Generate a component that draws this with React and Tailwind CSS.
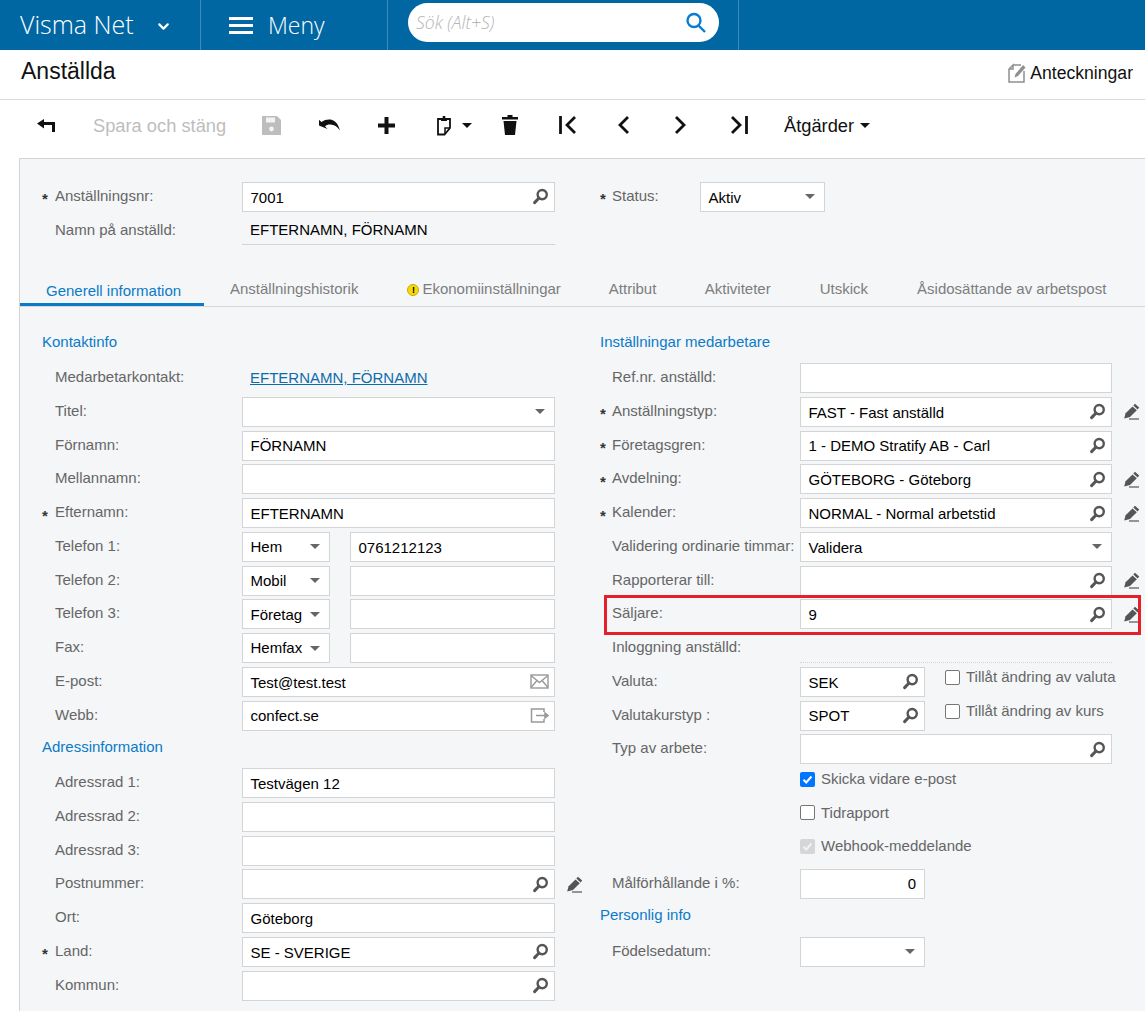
import { FiChevronDown } from "react-icons/fi";

function Lens() {
  return (
    <svg width="17" height="17" viewBox="0 0 17 17" fill="none" className="text-[#555]">
      <circle cx="10.2" cy="6.6" r="4.6" stroke="currentColor" strokeWidth="2.4" />
      <path d="M6.8 10.2 2.6 14.6" stroke="currentColor" strokeWidth="3" strokeLinecap="round" />
    </svg>
  );
}

function Pencil() {
  return (
    <svg width="17" height="17" viewBox="0 0 17 17" className="text-[#555]" fill="currentColor">
      <path d="M12 .8 16.2 4.6 14.6 6.4 10.3 2.6Z" />
      <path d="M9.5 3.4 13.8 7.2 7 14 1.2 15.4 2.6 10.2Z" />
      <path d="M6 15.4h10v1.2H6z" />
    </svg>
  );
}

function Caret({ color = "border-t-[#666]" }) {
  return <span className={`h-0 w-0 border-x-[5px] border-t-[5px] border-x-transparent ${color}`} />;
}

function Field({ w = "w-[313px]", value, icon }) {
  return (
    <div className={`${w} h-[30px] shrink-0 flex items-center justify-between pl-[7.5px] pr-[5px] bg-white border border-[#d2d4d6] text-[15px] text-black`}>
      <span className="whitespace-nowrap pt-[2px]">{value}</span>
      {icon === "search" && <Lens />}
      {icon === "select" && <span className="mr-[4px] flex"><Caret /></span>}
      {icon === "mail" && (
        <svg width="19" height="15" viewBox="0 0 19 15" fill="none" stroke="#999" strokeWidth="1.4">
          <rect x="1" y="1" width="17" height="13" />
          <path d="M1 1.5 9.5 8.5 18 1.5M1 13.5 7 6.5M18 13.5 12 6.5" />
        </svg>
      )}
      {icon === "web" && (
        <svg width="19" height="15" viewBox="0 0 19 15" fill="none" stroke="#999" strokeWidth="1.5">
          <path d="M14 4V1H1.5v13H14v-3" />
          <path d="M6 7.5h9" />
          <path d="M15 5v5l3-2.5z" fill="#999" />
        </svg>
      )}
    </div>
  );
}

function Row({ star, label, starW = "w-[13px]", labelW = "w-[187px]", children }) {
  return (
    <div className="h-[33.76px] flex items-center">
      <span className={`${starW} text-[15px] font-bold leading-none text-[#333] pt-[4px]`}>{star ? "*" : ""}</span>
      <span className={`${labelW} shrink-0 text-[15px] text-[#666] whitespace-nowrap -mt-[1.4px]`}>{label}</span>
      {children}
    </div>
  );
}

// right column sits 1px tighter than the left one
function RightRow(props) {
  return <Row starW="w-[12px]" labelW="w-[188px]" {...props} />;
}

function Heading({ children }) {
  return <div className="h-[33.76px] flex items-center pb-[5px] text-[15px] text-[#0a7bc8]">{children}</div>;
}

function Check({ on, off }) {
  if (on) {
    return (
      <span className="w-[15px] h-[15px] shrink-0 rounded-[2px] bg-[#0075ff] flex items-center justify-center">
        <svg width="11" height="11" viewBox="0 0 11 11" fill="none" stroke="white" strokeWidth="2"><path d="M1.5 5.8 4.2 8.5 9.5 2.5" /></svg>
      </span>
    );
  }
  if (off) {
    return (
      <span className="w-[15px] h-[15px] shrink-0 rounded-[2px] bg-[#d4d6d8] flex items-center justify-center">
        <svg width="11" height="11" viewBox="0 0 11 11" fill="none" stroke="#f2f2f2" strokeWidth="2"><path d="M1.5 5.8 4.2 8.5 9.5 2.5" /></svg>
      </span>
    );
  }
  return <span className="w-[15px] h-[15px] shrink-0 rounded-[2px] border border-[#767676] bg-white" />;
}

function PhoneRow({ label, kind, value }) {
  return (
    <Row label={label}>
      <div className="w-[88px] h-[30px] shrink-0 flex items-center justify-between pl-[7.5px] pr-[9px] bg-white border border-[#d2d4d6] text-[15px] text-black">
        <span className="pt-[1px]">{kind}</span>
        <Caret />
      </div>
      <div className="ml-[20px]">
        <Field w="w-[205px]" value={value} />
      </div>
    </Row>
  );
}

function ToolIcon({ children, w }) {
  return <div className={`${w} h-[24px] shrink-0 flex items-center`}>{children}</div>;
}

function Toolbar() {
  return (
    <div className="h-[58px] flex items-center pl-[37px] pb-[8px]">
      <ToolIcon w="w-[56px]">
        <svg width="18" height="13" viewBox="0 0 18 13"><path d="M0 4.5 7 0v3h11v10h-3V6H7v3.5z" fill="#111" /></svg>
      </ToolIcon>
      <span className="w-[169px] shrink-0 pt-[2px] text-[18.3px] text-[#bdbdbd] whitespace-nowrap">Spara och stäng</span>
      <ToolIcon w="w-[57px]">
        <svg width="19" height="19" viewBox="0 0 19 19"><path d="M0 0h15l4 4v15H0z" fill="#bdbdbd" /><path d="M4 1.5h9v5H4z" fill="#f3f3f3" /><circle cx="9.5" cy="13" r="2.4" fill="#f3f3f3" /></svg>
      </ToolIcon>
      <ToolIcon w="w-[59px]">
        <svg width="21" height="12" viewBox="0 0 21 12"><path d="M0 6.5 0 .8 2.4 3C5 1 8 .3 11 .5 15.5 1 19 4 21 11.5 18.5 7.5 15 5.5 11.5 5.5 9 5.400 7.5 6 6 7.2L8.5 10Z" fill="#111" /></svg>
      </ToolIcon>
      <ToolIcon w="w-[58px]">
        <svg width="17" height="17" viewBox="0 0 17 17"><path d="M6.5 0h4v6.5H17v4h-6.5V17h-4v-6.500H0v-4h6.500z" fill="#111" /></svg>
      </ToolIcon>
      <ToolIcon w="w-[66px]">
        <svg width="16" height="21" viewBox="0 0 16 21" fill="none"><path d="M2 4h12v9l-5.5 6.5H2z" stroke="#111" strokeWidth="1.8" /><path d="M9 19v-6h5" stroke="#111" strokeWidth="1.5" /><path d="M5 3h1.7V1h2.6v2H11v3H5z" fill="#111" /></svg>
        <span className="ml-[10px] flex"><Caret color="border-t-[#111]" /></span>
      </ToolIcon>
      <ToolIcon w="w-[57px]">
        <svg width="16" height="20" viewBox="0 0 16 20"><path d="M5.5 0h5v2H16v2.5H0V2h5.5zM1.5 6h13L13 20H3z" fill="#111" /></svg>
      </ToolIcon>
      <ToolIcon w="w-[58px]">
        <svg width="18" height="18" viewBox="0 0 18 18" fill="none" stroke="#111" strokeWidth="2.8"><path d="M1.5 0v18" /><path d="M16 1 8 9l8 8" /></svg>
      </ToolIcon>
      <ToolIcon w="w-[58px]">
        <svg width="12" height="18" viewBox="0 0 12 18" fill="none" stroke="#111" strokeWidth="2.8"><path d="M11 1 3 9l8 8" /></svg>
      </ToolIcon>
      <ToolIcon w="w-[55px]">
        <svg width="12" height="18" viewBox="0 0 12 18" fill="none" stroke="#111" strokeWidth="2.8"><path d="m1 1 8 8-8 8" /></svg>
      </ToolIcon>
      <ToolIcon w="w-[54px]">
        <svg width="18" height="18" viewBox="0 0 18 18" fill="none" stroke="#111" strokeWidth="2.8"><path d="M16.5 0v18" /><path d="m2 1 8 8-8 8" /></svg>
      </ToolIcon>
      <span className="pt-[2px] text-[18.3px] text-[#111] whitespace-nowrap">Åtgärder</span>
      <span className="ml-[6px] flex"><Caret color="border-t-[#111]" /></span>
    </div>
  );
}

function Tabs() {
  return (
    <div className="mt-[24px] h-[35px] flex items-center border-b border-[#d8d8d8] text-[15px] text-[#7d7d7d] whitespace-nowrap">
      <div className="h-[35px] w-[184px] shrink-0 flex items-center pl-[26px] pt-[8px] border-b-[3px] border-[#0a7bc8] text-[#0a7bc8]">Generell information</div>
      <span className="ml-[26px] pt-[2px]">Anställningshistorik</span>
      <span className="ml-[49px] pt-[2px] flex items-center">
        <span className="w-[12px] h-[12px] mr-[3px] rounded-full bg-[#f5d90a] border border-[#c7ad00] text-[9px] leading-[10px] font-bold text-black text-center">!</span>
        Ekonomiinställningar
      </span>
      <span className="ml-[48px] pt-[2px]">Attribut</span>
      <span className="ml-[48.5px] pt-[2px]">Aktiviteter</span>
      <span className="ml-[49px] pt-[2px]">Utskick</span>
      <span className="ml-[49px] pt-[2px]">Åsidosättande av arbetspost</span>
    </div>
  );
}

export default function App() {
  return (
    <div className="w-[1145px] h-[1011px] overflow-hidden bg-white font-[family-name:Liberation_Sans,Arial,sans-serif]">
      <header className="h-[50px] flex bg-[#0067a3] text-white font-[family-name:Open_Sans,sans-serif] font-light">
        <div className="w-[201px] shrink-0 flex items-center pl-[20px] border-r border-[#3d8cbd]">
          <span className="text-[25px]">Visma Net</span>
          <FiChevronDown className="ml-[21px] mt-[3px] text-[17px]" strokeWidth={3} />
        </div>
        <div className="w-[187px] shrink-0 flex items-center pl-[28px] border-r border-[#3d8cbd]">
          <span className="flex flex-col gap-[4px]">
            <span className="w-[24px] h-[3px] bg-white" />
            <span className="w-[24px] h-[3px] bg-white" />
            <span className="w-[24px] h-[3px] bg-white" />
          </span>
          <span className="ml-[15px] text-[23px]">Meny</span>
        </div>
        <div className="w-[351px] shrink-0 pl-[20px] pr-[19px] pt-[3px] border-r border-[#3d8cbd]">
          <div className="h-[39px] flex items-center justify-between pl-[8px] pr-[12px] bg-white rounded-[20px]">
            <span className="italic text-[17.5px] text-[#b5b5b5]">Sök (Alt+S)</span>
            <svg width="22" height="22" viewBox="0 0 22 22" fill="none" stroke="#0a7bd0" strokeWidth="2.4">
              <circle cx="9" cy="8.5" r="6.5" />
              <path d="m13.5 13.5 6.5 6.5" />
            </svg>
          </div>
        </div>
      </header>

      <div className="h-[50px] flex items-center justify-between pl-[21px] pr-[12px] border-b border-[#d9d9d9]">
        <h1 className="-mt-[7px] text-[23px] text-[#111]">Anställda</h1>
        <div className="flex items-center -mt-[3px]">
          <svg width="19" height="20" viewBox="0 0 19 20" fill="none">
            <path d="M6 2h8M17 8v11H2V6l4-4v4H2" stroke="#8f8f8f" strokeWidth="1.5" />
            <path d="M16 2 18.5 4.5 11 13 7.5 14.5 8.5 11z" fill="#8f8f8f" />
          </svg>
          <span className="ml-[4px] text-[17.6px] text-[#111]">Anteckningar</span>
        </div>
      </div>

      <Toolbar />

      <main className="ml-[19px] h-[853px] bg-[#f4f6f8] border-l border-t border-[#d2d4d6]">
        <div className="pt-[6px]">
          <div className="flex pt-[15px]">
            <div className="w-[580px] shrink-0 pl-[22px]">
              <Row star label="Anställningsnr:">
                <Field value="7001" icon="search" />
              </Row>
              <Row label="Namn på anställd:">
                <div className="w-[313px] h-[29px] flex items-center pl-[8px] pt-[1px] border-b border-[#d2d4d6] text-[15px] text-black">EFTERNAMN, FÖRNAMN</div>
              </Row>
            </div>
            <div>
              <RightRow star label="Status:" labelW="w-[88px]">
                <Field w="w-[125px]" value="Aktiv" icon="select" />
              </RightRow>
            </div>
          </div>
          <Tabs />
        </div>

        <div className="flex pt-[21px]">
          <section className="w-[580px] shrink-0 pl-[22px]">
            <Heading>Kontaktinfo</Heading>
            <Row label="Medarbetarkontakt:">
              <a className="pl-[8px] text-[15px] text-[#0f6cab] underline">EFTERNAMN, FÖRNAMN</a>
            </Row>
            <Row label="Titel:"><Field icon="select" /></Row>
            <Row label="Förnamn:"><Field value="FÖRNAMN" /></Row>
            <Row label="Mellannamn:"><Field /></Row>
            <Row star label="Efternamn:"><Field value="EFTERNAMN" /></Row>
            <PhoneRow label="Telefon 1:" kind="Hem" value="0761212123" />
            <PhoneRow label="Telefon 2:" kind="Mobil" />
            <PhoneRow label="Telefon 3:" kind="Företag" />
            <PhoneRow label="Fax:" kind="Hemfax" />
            <Row label="E-post:"><Field value="Test@test.test" icon="mail" /></Row>
            <Row label="Webb:"><Field value="confect.se" icon="web" /></Row>
            <Heading>Adressinformation</Heading>
            <Row label="Adressrad 1:"><Field value="Testvägen 12" /></Row>
            <Row label="Adressrad 2:"><Field /></Row>
            <Row label="Adressrad 3:"><Field /></Row>
            <Row label="Postnummer:">
              <Field icon="search" />
              <span className="ml-[11px] flex"><Pencil /></span>
            </Row>
            <Row label="Ort:"><Field value="Göteborg" /></Row>
            <Row star label="Land:"><Field value="SE - SVERIGE" icon="search" /></Row>
            <Row label="Kommun:"><Field icon="search" /></Row>
          </section>

          <section className="flex-1">
            <Heading>Inställningar medarbetare</Heading>
            <RightRow label="Ref.nr. anställd:"><Field w="w-[312px]" /></RightRow>
            <RightRow star label="Anställningstyp:">
              <Field w="w-[312px]" value="FAST - Fast anställd" icon="search" />
              <span className="ml-[11px] flex"><Pencil /></span>
            </RightRow>
            <RightRow star label="Företagsgren:"><Field w="w-[312px]" value="1 - DEMO Stratify AB - Carl" icon="search" /></RightRow>
            <RightRow star label="Avdelning:">
              <Field w="w-[312px]" value="GÖTEBORG - Göteborg" icon="search" />
              <span className="ml-[11px] flex"><Pencil /></span>
            </RightRow>
            <RightRow star label="Kalender:">
              <Field w="w-[312px]" value="NORMAL - Normal arbetstid" icon="search" />
              <span className="ml-[11px] flex"><Pencil /></span>
            </RightRow>
            <RightRow label="Validering ordinarie timmar:"><Field w="w-[312px]" value="Validera" icon="select" /></RightRow>
            <RightRow label="Rapporterar till:">
              <Field w="w-[312px]" icon="search" />
              <span className="ml-[11px] flex"><Pencil /></span>
            </RightRow>
            <div className="relative">
              <RightRow label="Säljare:">
                <Field w="w-[312px]" value="9" icon="search" />
                <span className="ml-[11px] flex"><Pencil /></span>
              </RightRow>
              <div className="absolute left-[4px] top-[-3px] w-[537px] h-[40px] border-[3px] border-[#e5202a]" />
            </div>
            <RightRow label="Inloggning anställd:">
              <div className="w-[312px] h-[30px] border-b border-dotted border-[#d2d4d6]" />
            </RightRow>
            <RightRow label="Valuta:">
              <Field w="w-[125px]" value="SEK" icon="search" />
              <span className="ml-[20px] -mt-[9px] flex items-center gap-[6px] text-[15px] text-[#666] whitespace-nowrap"><Check />Tillåt ändring av valuta</span>
            </RightRow>
            <RightRow label="Valutakurstyp :">
              <Field w="w-[125px]" value="SPOT" icon="search" />
              <span className="ml-[20px] -mt-[8px] flex items-center gap-[6px] text-[15px] text-[#666] whitespace-nowrap"><Check />Tillåt ändring av kurs</span>
            </RightRow>
            <RightRow label="Typ av arbete:"><Field w="w-[312px]" icon="search" /></RightRow>
            <RightRow label="">
              <span className="-mt-[7px] flex items-center gap-[6px] text-[15px] text-[#666]"><Check on />Skicka vidare e-post</span>
            </RightRow>
            <RightRow label="">
              <span className="-mt-[8px] flex items-center gap-[6px] text-[15px] text-[#666]"><Check />Tidrapport</span>
            </RightRow>
            <RightRow label="">
              <span className="-mt-[8px] flex items-center gap-[6px] text-[15px] text-[#666]"><Check off />Webhook-meddelande</span>
            </RightRow>
            <RightRow label="Målförhållande i %:">
              <div className="w-[125px] h-[30px] flex items-center justify-end pr-[8px] bg-white border border-[#d2d4d6] text-[15px] text-black">0</div>
            </RightRow>
            <Heading>Personlig info</Heading>
            <RightRow label="Födelsedatum:"><Field w="w-[125px]" icon="select" /></RightRow>
          </section>
        </div>
      </main>
    </div>
  );
}
